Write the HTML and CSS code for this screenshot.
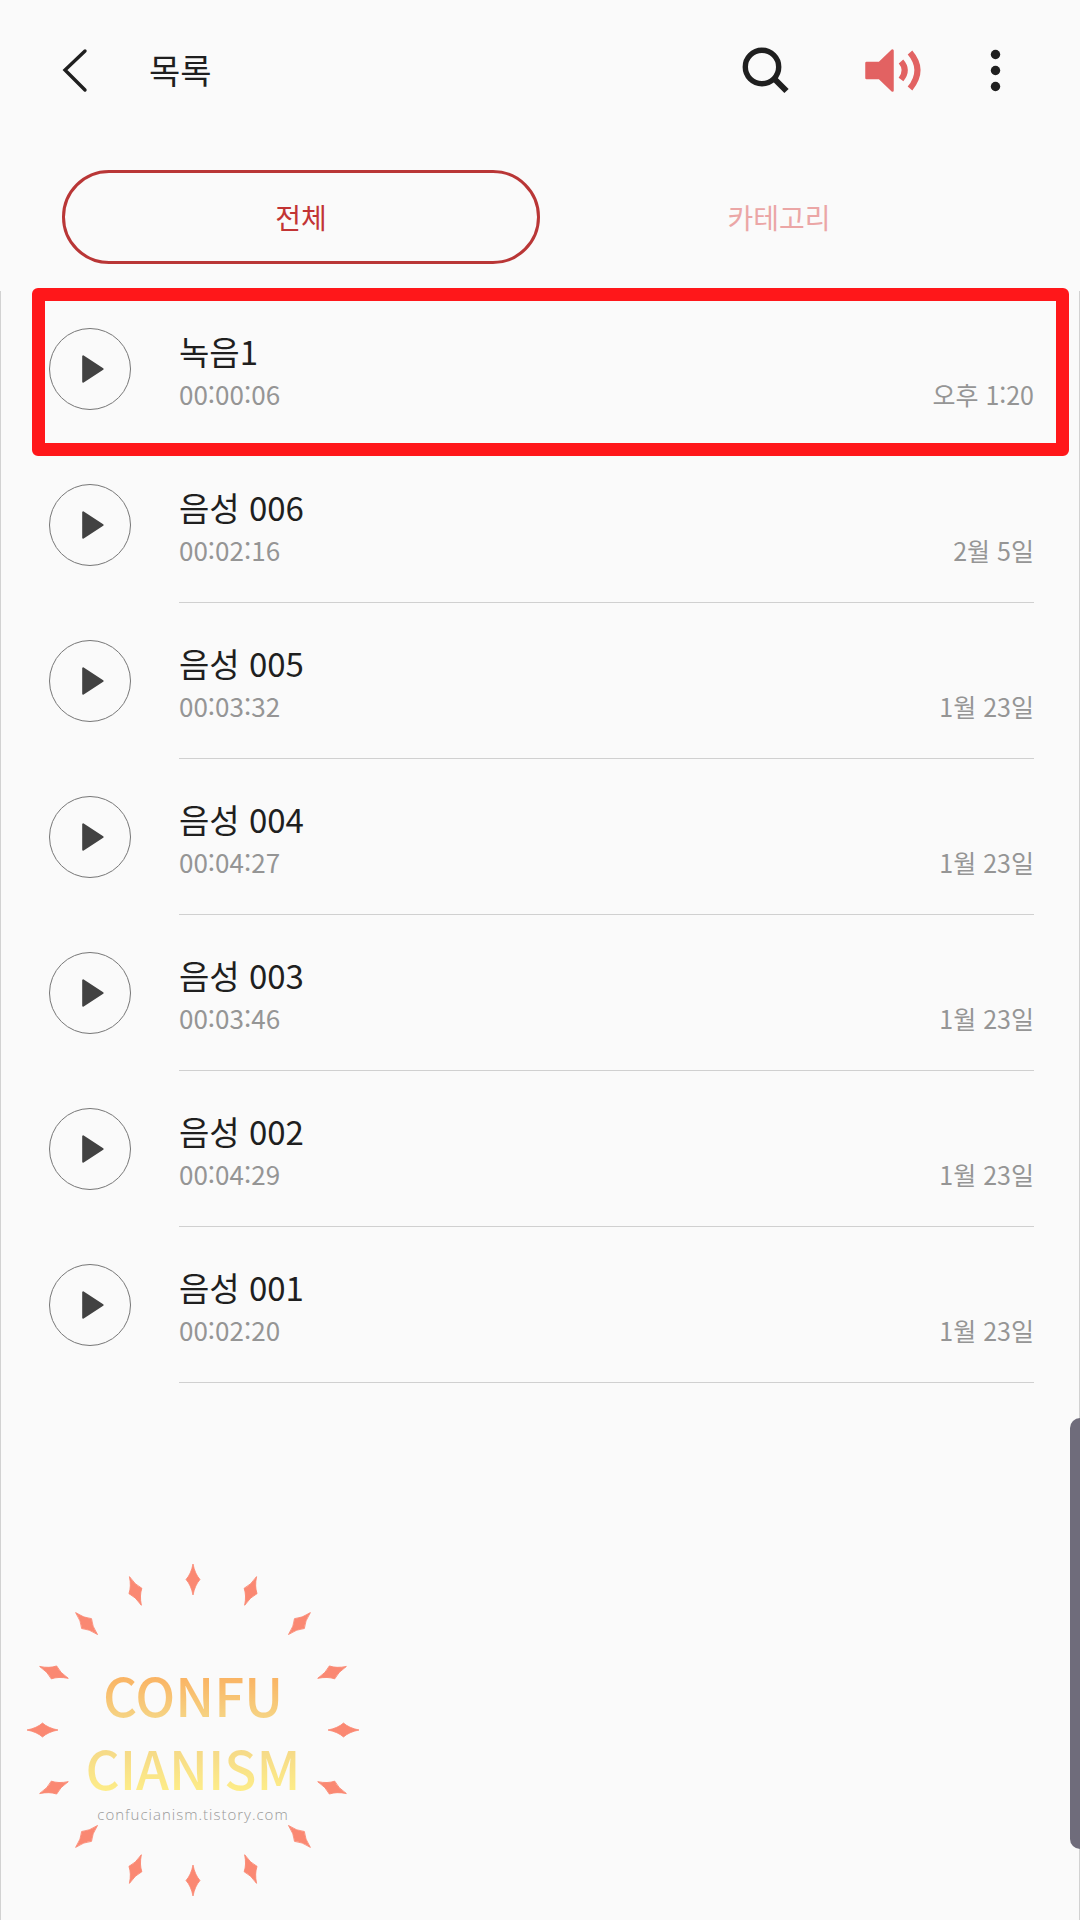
FILE: index.html
```html
<!DOCTYPE html>
<html lang="ko">
<head>
    <meta charset="UTF-8">
    <meta name="viewport" content="width=device-width, initial-scale=1.0">
    <title>목록</title>
    <link rel="stylesheet" href="styles.css">
</head>
<body>
    <header class="header">
        <button class="icon-btn" type="button" aria-label="뒤로">
            <svg width="64" height="64" viewBox="0 0 64 64" fill="none" stroke="#1f1f1f" stroke-width="3.4" stroke-linecap="round"><path d="M40 13 20 32 40 52"/></svg>
        </button>
        <h1 class="title">목록</h1>
        <div class="actions">
            <button class="icon-btn" type="button" aria-label="검색">
                <svg width="64" height="64" viewBox="0 0 64 64" fill="none" stroke="#1f1f1f"><circle cx="21" cy="29" r="16.7" stroke-width="5.4"/><path d="M33 40.5 45.5 53" stroke-width="6"/></svg>
            </button>
            <button class="icon-btn" type="button" aria-label="스피커">
                <svg width="64" height="64" viewBox="0 0 64 64" fill="none" stroke="#e26262">
                    <path d="M9.5 25H22.5L35.5 12.5V52.5L22.5 40H9.5Z" fill="#e26262" stroke-width="2.5" stroke-linejoin="round"/>
                    <path d="M44 23.500Q51.500 32 44 41.500" stroke-width="6"/>
                    <path d="M53 14.500Q68 32 53 50.500" stroke-width="6"/>
                </svg>
            </button>
            <button class="icon-btn icon-btn-more" type="button" aria-label="더보기">
                <svg width="44" height="64" viewBox="0 0 44 64" fill="#1f1f1f"><circle cx="22.5" cy="16.5" r="4.7"/><circle cx="22.5" cy="32.5" r="4.7"/><circle cx="22.5" cy="48.5" r="4.7"/></svg>
            </button>
        </div>
    </header>

    <nav class="tabs">
        <button class="tab active" type="button">전체</button>
        <button class="tab" type="button">카테고리</button>
    </nav>

    <main class="content">
        <ul class="list">
            <li class="row highlight">
                <button class="play" type="button" aria-label="재생"><svg viewBox="0 0 82 82"><path d="M34 28V54L54 41Z"/></svg></button>
                <div class="info">
                    <span class="name">녹음1</span>
                    <div class="meta"><span class="duration">00:00:06</span><span class="date">오후 1:20</span></div>
                </div>
            </li>
            <li class="row">
                <button class="play" type="button" aria-label="재생"><svg viewBox="0 0 82 82"><path d="M34 28V54L54 41Z"/></svg></button>
                <div class="info">
                    <span class="name">음성 006</span>
                    <div class="meta"><span class="duration">00:02:16</span><span class="date">2월 5일</span></div>
                </div>
            </li>
            <li class="row">
                <button class="play" type="button" aria-label="재생"><svg viewBox="0 0 82 82"><path d="M34 28V54L54 41Z"/></svg></button>
                <div class="info">
                    <span class="name">음성 005</span>
                    <div class="meta"><span class="duration">00:03:32</span><span class="date">1월 23일</span></div>
                </div>
            </li>
            <li class="row">
                <button class="play" type="button" aria-label="재생"><svg viewBox="0 0 82 82"><path d="M34 28V54L54 41Z"/></svg></button>
                <div class="info">
                    <span class="name">음성 004</span>
                    <div class="meta"><span class="duration">00:04:27</span><span class="date">1월 23일</span></div>
                </div>
            </li>
            <li class="row">
                <button class="play" type="button" aria-label="재생"><svg viewBox="0 0 82 82"><path d="M34 28V54L54 41Z"/></svg></button>
                <div class="info">
                    <span class="name">음성 003</span>
                    <div class="meta"><span class="duration">00:03:46</span><span class="date">1월 23일</span></div>
                </div>
            </li>
            <li class="row">
                <button class="play" type="button" aria-label="재생"><svg viewBox="0 0 82 82"><path d="M34 28V54L54 41Z"/></svg></button>
                <div class="info">
                    <span class="name">음성 002</span>
                    <div class="meta"><span class="duration">00:04:29</span><span class="date">1월 23일</span></div>
                </div>
            </li>
            <li class="row">
                <button class="play" type="button" aria-label="재생"><svg viewBox="0 0 82 82"><path d="M34 28V54L54 41Z"/></svg></button>
                <div class="info">
                    <span class="name">음성 001</span>
                    <div class="meta"><span class="duration">00:02:20</span><span class="date">1월 23일</span></div>
                </div>
            </li>
        </ul>

        <div class="logo">
            <svg class="logo-stars" viewBox="-164 -164 328 328" fill="#fa8872">
                <defs><path id="star" d="M0-166Q2-156 7-150.500Q2-145 0-135Q-2-145-7-150.500Q-2-156 0-166Z" stroke="#fa8872" stroke-width=".8"/></defs>
                <use href="#star"/>
                <use href="#star" transform="rotate(22.5)"/>
                <use href="#star" transform="rotate(45)"/>
                <use href="#star" transform="rotate(67.5)"/>
                <use href="#star" transform="rotate(90)"/>
                <use href="#star" transform="rotate(112.5)"/>
                <use href="#star" transform="rotate(135)"/>
                <use href="#star" transform="rotate(157.5)"/>
                <use href="#star" transform="rotate(180)"/>
                <use href="#star" transform="rotate(202.5)"/>
                <use href="#star" transform="rotate(225)"/>
                <use href="#star" transform="rotate(247.5)"/>
                <use href="#star" transform="rotate(270)"/>
                <use href="#star" transform="rotate(292.5)"/>
                <use href="#star" transform="rotate(315)"/>
                <use href="#star" transform="rotate(337.5)"/>
            </svg>
            <span class="logo-word">CONFU</span>
            <span class="logo-word logo-word-light">CIANISM</span>
            <span class="logo-url">confucianism.tistory.com</span>
        </div>
    </main>

    <div class="edge-handle"></div>
</body>
</html>
```
FILE: styles.css
```css
* {
    box-sizing: border-box;
}

body {
    margin: 0;
    min-height: 100vh;
    display: flex;
    flex-direction: column;
    position: relative;
    background: #fafafa;
    color: #1f1f1f;
    font-family: 'Noto Sans CJK KR', 'Noto Sans', sans-serif;
}

button {
    padding: 0;
    border: none;
    background: none;
    color: inherit;
    font: inherit;
    cursor: pointer;
}

.header {
    display: flex;
    align-items: center;
    height: 140px;
    padding: 0 63px 0 45px;
}

.icon-btn {
    width: 64px;
    height: 64px;
}

.icon-btn svg {
    display: block;
    overflow: visible;
}

.icon-btn-more {
    width: 44px;
}

.title {
    margin: 0 0 0 40px;
    font-size: 34px;
    font-weight: 400;
    line-height: 44px;
}

.actions {
    display: flex;
    gap: 52px;
    margin-left: auto;
}

.tabs {
    display: grid;
    grid-template-columns: 1fr 1fr;
    margin: 30px 62px 27px;
}

.tab {
    height: 94px;
    border-radius: 47px;
    color: #eba6a6;
    font-size: 28px;
}

.tab.active {
    border: 3px solid #b93636;
    color: #c23434;
}

.content {
    flex: 1;
    display: flex;
    flex-direction: column;
    border: 1px solid #d2d2d2;
    border-width: 0 1px;
}

.list {
    margin: 0;
    padding: 0;
    list-style: none;
}

.row {
    display: flex;
    align-items: center;
    gap: 48px;
    position: relative;
    padding: 0 45px 0 48px;
}

/* red frame around the newest recording */
.highlight::after {
    content: '';
    position: absolute;
    top: -3px;
    right: 10px;
    bottom: -9px;
    left: 31px;
    border: 13px solid #ff171a;
    border-radius: 6px;
    pointer-events: none;
}

.play {
    flex: none;
    width: 82px;
    height: 82px;
    border: 1px solid #777;
    border-radius: 50%;
}

.play svg {
    display: block;
    fill: #424242;
    stroke: #424242;
    stroke-width: 2;
    stroke-linejoin: round;
}

.info {
    flex: 1;
    padding: 38px 0 31px;
    border-bottom: 1px solid #d0d0d0;
}

.name {
    display: block;
    font-size: 33px;
    line-height: 44px;
}

.meta {
    display: flex;
    justify-content: space-between;
    color: #959595;
    line-height: 42px;
}

.duration {
    font-size: 26px;
}

.date {
    font-size: 25px;
}

.logo {
    display: flex;
    flex-direction: column;
    align-items: center;
    position: relative;
    width: 328px;
    height: 328px;
    margin: auto 0 26px 28px;
    padding-top: 92px;
}

.logo-stars {
    position: absolute;
    inset: 0;
    overflow: visible;
}

.logo-word {
    background: linear-gradient(#fab363 25%, #f6d282 80%);
    -webkit-background-clip: text;
    background-clip: text;
    color: transparent;
    font-size: 53px;
    font-weight: 500;
    line-height: 73px;
}

.logo-word-light {
    background-image: linear-gradient(#f5d988 25%, #fdec88 80%);
}

.logo-url {
    color: #999;
    font-family: 'Open Sans', sans-serif;
    font-size: 15px;
    font-weight: 300;
    letter-spacing: 1px;
    line-height: 20px;
}

.edge-handle {
    position: absolute;
    top: 1418px;
    right: 0;
    width: 10px;
    height: 431px;
    border-radius: 10px 0 0 10px;
    background: #6f6c7b;
}
```
